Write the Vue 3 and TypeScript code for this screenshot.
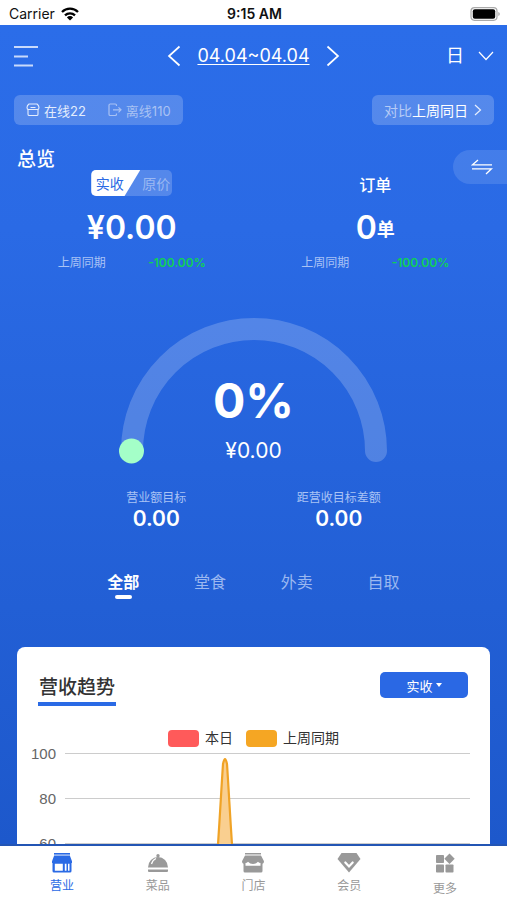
<script setup lang="ts">
import { ref } from 'vue'

interface Tab {
  id: string
  label: string
}

const channels: Tab[] = [
  { id: 'all', label: '全部' },
  { id: 'dine', label: '堂食' },
  { id: 'takeout', label: '外卖' },
  { id: 'pickup', label: '自取' },
]
const activeChannel = ref('all')

const navItems: Tab[] = [
  { id: 'business', label: '营业' },
  { id: 'dishes', label: '菜品' },
  { id: 'store', label: '门店' },
  { id: 'member', label: '会员' },
  { id: 'more', label: '更多' },
]
const activeNav = ref('business')

const priceMode = ref<'net' | 'gross'>('net')

const targets = [
  { label: '营业额目标', value: '0.00' },
  { label: '距营收目标差额', value: '0.00' },
]

const ticks = [100, 80, 60]
</script>

<template>
  <div class="app">
    <div class="status">
      <div class="carrier">
        <span>Carrier</span>
        <svg width="18" height="14" viewBox="0 0 18 14" aria-hidden="true">
          <g fill="none" stroke="#000" stroke-width="2.3">
            <path d="M1 5a11.4 11.4 0 0 1 16 0" />
            <path d="M4 8.300a7.200 7.200 0 0 1 10 0" />
          </g>
          <path d="M9 13.500 5.900 10.400a4.400 4.400 0 0 1 6.200 0z" />
        </svg>
      </div>
      <span class="clock">9:15 AM</span>
      <svg class="battery" width="30" height="14" viewBox="0 0 30 14" aria-hidden="true">
        <rect x="1" y="0.700" width="26" height="12.600" rx="3.500" fill="#fff" stroke="#aaa" stroke-width="1.200" />
        <rect x="2.800" y="2.300" width="22.400" height="9.400" rx="2" />
        <path d="M28.300 5v4q1.500-.5 1.500-2t-1.500-2z" fill="#aaa" />
      </svg>
    </div>

    <main class="dashboard">
      <header class="toolbar">
        <button class="menu" aria-label="菜单">
          <svg width="26" height="24" viewBox="0 0 26 24" fill="none" stroke="#c9dafb" stroke-width="2">
            <path d="M1 3h24M1 12.500h14M1 21.500h19" />
          </svg>
        </button>
        <div class="dates">
          <button aria-label="前一天">
            <svg width="14" height="22" viewBox="0 0 14 22" fill="none" stroke="#fff" stroke-width="1.700">
              <path d="M12.500 1.500 2 11l10.500 9.500" />
            </svg>
          </button>
          <a href="#">04.04~04.04</a>
          <button aria-label="后一天">
            <svg width="14" height="22" viewBox="0 0 14 22" fill="none" stroke="#fff" stroke-width="1.700">
              <path d="M1.500 1.500 12 11 1.500 20.500" />
            </svg>
          </button>
        </div>
        <button class="unit">
          <span>日</span>
          <svg width="16" height="10" viewBox="0 0 16 10" fill="none" stroke="#fff" stroke-width="1.200">
            <path d="m1 1 7 7.500L15 1" />
          </svg>
        </button>
      </header>

      <div class="filters">
        <div class="chip presence">
          <span class="online">
            <svg width="14" height="14" viewBox="0 0 14 14" fill="none" stroke="currentColor" stroke-width="1.100">
              <path d="M3 1h8q2 1.500 2 3.500 0 2-1.500 2h-9Q1 6.500 1 4.500 1 2.500 3 1zM4.500 4.500h5M2 6.500v4.700Q2 12.500 3.300 12.500h7.400q1.300 0 1.300-1.300V6.500" />
            </svg>
            在线22
          </span>
          <span class="offline">
            <svg width="14" height="14" viewBox="0 0 14 14" fill="none" stroke="currentColor" stroke-width="1.200">
              <path d="M8.500 3V2.300Q8.500 1 7.200 1H2.300Q1 1 1 2.300v8.900q0 1.300 1.300 1.300h4.900q1.300 0 1.300-1.300v-.7M5 6.800h8M10.500 4.300 13 6.800l-2.500 2.500" />
            </svg>
            离线110
          </span>
        </div>
        <button class="chip compare">
          <span><i>对比</i>上周同日</span>
          <svg width="8" height="12" viewBox="0 0 8 12" fill="none" stroke="#e6eefd" stroke-width="1.200">
            <path d="m1 1 5.500 5L1 11" />
          </svg>
        </button>
      </div>

      <section class="overview">
        <h2>总览</h2>
        <button class="swap" aria-label="切换">
          <svg width="22" height="16" viewBox="0 0 22 16" fill="none" stroke="#fff" stroke-width="1.300">
            <path d="M21 5.800H1.500L7 1M1 9.800h19.500L15 15" />
          </svg>
        </button>
        <div class="metric">
          <div class="mode">
            <button :class="{ on: priceMode === 'net' }" @click="priceMode = 'net'">实收</button>
            <button :class="{ on: priceMode === 'gross' }" @click="priceMode = 'gross'">原价</button>
          </div>
          <strong>¥0.00</strong>
          <p><span>上周同期</span><b>-100.00%</b></p>
        </div>
        <div class="metric">
          <h3>订单</h3>
          <strong>0<small>单</small></strong>
          <p><span>上周同期</span><b>-100.00%</b></p>
        </div>
      </section>

      <section class="gauge">
        <svg width="270" height="150" viewBox="0 0 270 150" aria-hidden="true">
          <path d="M13 133a122 122 0 0 1 244 0" fill="none" stroke="#fff" stroke-opacity=".2" stroke-width="22" stroke-linecap="round" />
          <circle cx="12.500" cy="133" r="12.500" fill="#a4ffc8" />
        </svg>
        <div class="reading">
          <strong>0%</strong>
          <span>¥0.00</span>
        </div>
      </section>

      <dl class="targets">
        <div v-for="t in targets" :key="t.label">
          <dt>{{ t.label }}</dt>
          <dd>{{ t.value }}</dd>
        </div>
      </dl>

      <div class="channels">
        <button
          v-for="c in channels"
          :key="c.id"
          :class="{ on: activeChannel === c.id }"
          @click="activeChannel = c.id"
        >
          {{ c.label }}
        </button>
      </div>

      <section class="card">
        <div class="card-head">
          <h2>营收趋势</h2>
          <button class="picker">
            实收
            <svg width="6" height="4" viewBox="0 0 6 4" aria-hidden="true"><path d="M0 0h6L3 4z" fill="#fff" /></svg>
          </button>
        </div>
        <div class="legend">
          <span><i class="today"></i>本日</span>
          <span><i class="last"></i>上周同期</span>
        </div>
        <div class="chart">
          <div v-for="n in ticks" :key="n" class="tick">
            <span>{{ n }}</span>
            <hr />
          </div>
          <svg class="peak" width="30" height="160" viewBox="0 0 30 160" aria-hidden="true">
            <path d="M3 160C8 104 10.500 50 13 13Q15 3 17 13C19.500 50 22 104 27 160z" fill="#f9cf90" stroke="#f0a326" stroke-width="2.200" />
          </svg>
        </div>
      </section>
    </main>

    <nav class="tabbar">
      <button
        v-for="item in navItems"
        :key="item.id"
        :class="[item.id, { on: activeNav === item.id }]"
        @click="activeNav = item.id"
      >
        <svg width="24" height="20" viewBox="0 0 24 20" fill="currentColor" aria-hidden="true">
          <template v-if="item.id === 'business'">
            <path d="M4 0h16v3H4z" opacity=".5" />
            <path d="M4 0h16v1.200H4zM4 3h16l2 5.200V10h-.5v8q0 1.500-1.500 1.500H4Q2.500 19.500 2.500 18v-8H2V8.200z" />
            <path d="M4.800 10.800h8v7h-8zM14.800 10.800h1.700v7h-1.700zM18 10.800h1.500v7H18z" fill="#fff" />
          </template>
          <template v-else-if="item.id === 'dishes'">
            <circle cx="12" cy="2.700" r="1.700" />
            <path d="M2 14.500a10 10.500 0 0 1 20 0zM2 16.500h20V18q0 1-1 1H3q-1 0-1-1z" />
            <path d="M5.500 11q1-4 4.500-5.500" fill="none" stroke="#fff" stroke-width="1.200" />
          </template>
          <template v-else-if="item.id === 'store'">
            <path d="M4 0h16v1.500H4z" />
            <path d="M4 2.500h16l3 5.700q0 2-1.500 2.600V18q0 1.500-1.500 1.500H4Q2.500 19.500 2.500 18v-7.200Q1 10.200 1 8.200z" />
            <path d="M4.500 10q1.500 0 2.500-1.200Q9 11 12 11t5-2.200Q18 10 19.500 10v2.800h-15z" fill="#fff" />
          </template>
          <template v-else-if="item.id === 'member'">
            <path d="M4.500 0h15L23.500 6 12 19.500.5 6z" />
            <path d="m8.300 9.500 3.700 4 3.700-4" fill="none" stroke="#fff" stroke-width="2.200" stroke-linecap="round" />
          </template>
          <template v-else>
            <rect x="3" y="2" width="8" height="8" rx=".8" />
            <rect x="3" y="11.500" width="8" height="8" rx=".8" />
            <rect x="12.500" y="11.500" width="8" height="8" rx=".8" />
            <path d="m16.500.6 5.200 5.200-5.200 5.200-5.200-5.200z" />
          </template>
        </svg>
        <span>{{ item.label }}</span>
      </button>
    </nav>
  </div>
</template>

<style>
body {
  margin: 0;
}
</style>

<style scoped>
* {
  box-sizing: border-box;
}
.app {
  display: flex;
  flex-direction: column;
  height: 100vh;
  overflow: hidden;
  background: #fff;
  color: #fff;
  font-family: Inter, "Noto Sans CJK SC", sans-serif;
}
button {
  padding: 0;
  border: 0;
  background: none;
  color: inherit;
  font: inherit;
  white-space: nowrap;
  cursor: pointer;
}
h2,
h3,
p,
dl,
dd {
  margin: 0;
}
svg {
  display: block;
  flex: none;
}
.status {
  display: grid;
  grid-template-columns: 1fr auto 1fr;
  align-items: center;
  height: 25px;
  padding: 2px 7px 0 9px;
  color: #111;
  font-size: 14px;
  line-height: 20px;
}
.carrier {
  display: flex;
  align-items: center;
  gap: 6px;
}
.clock {
  font-weight: 600;
}
.battery {
  justify-self: end;
}
.dashboard {
  flex: 1;
  min-height: 0;
  overflow: hidden;
  background: linear-gradient(#2b6de9, #2a6ae5 25%, #1d58cb);
  border-bottom: 2px solid #2355b4;
}
.toolbar {
  display: grid;
  grid-template-columns: 1fr auto 1fr;
  align-items: center;
  height: 62px;
  padding: 0 13px;
}
.menu {
  justify-self: start;
}
.dates {
  display: flex;
  align-items: center;
  gap: 16px;
}
.dates a {
  color: #fff;
  font-size: 18px;
  line-height: 24px;
  text-decoration: underline;
  text-underline-offset: 2px;
}
.unit {
  display: flex;
  align-items: center;
  justify-self: end;
  gap: 14px;
  font-size: 18px;
  line-height: 24px;
}
.filters {
  display: flex;
  justify-content: space-between;
  padding: 8px 13px 0 14px;
}
.chip {
  display: flex;
  align-items: center;
  height: 30px;
  padding: 0 12px;
  border-radius: 6px;
  background: rgba(255, 255, 255, 0.2);
  font-size: 13px;
}
.presence {
  gap: 22px;
}
.presence span {
  display: flex;
  align-items: center;
  gap: 4px;
}
.online {
  color: #e4edfd;
}
.offline {
  color: #a9c2f3;
}
.compare {
  gap: 6px;
}
.compare span {
  font-size: 14px;
}
.compare i {
  color: #b5cbf6;
  font-style: normal;
}
.overview {
  position: relative;
  display: grid;
  grid-template-columns: 1fr 1fr;
  padding: 45px 10px 0;
}
.overview h2 {
  position: absolute;
  top: 22px;
  left: 17px;
  font-size: 19px;
  font-weight: 500;
  line-height: 26px;
}
.swap {
  position: absolute;
  top: 25px;
  right: 0;
  display: flex;
  align-items: center;
  width: 54px;
  height: 34px;
  padding-left: 18px;
  border-radius: 17px 0 0 17px;
  background: rgba(255, 255, 255, 0.12);
}
.metric {
  display: flex;
  flex-direction: column;
  align-items: center;
}
.mode {
  display: flex;
  width: 81px;
  height: 26px;
  border-radius: 5px;
  background: rgba(255, 255, 255, 0.2);
  overflow: hidden;
}
.mode button {
  flex: 1;
  color: #9bb8f2;
  font-size: 14px;
}
.mode .on {
  flex: none;
  width: 49px;
  padding: 0 12px 0 0;
  background: #fff;
  color: #2b6ae4;
  clip-path: polygon(0 0, 100% 0, 68% 100%, 0 100%);
}
.metric h3 {
  height: 26px;
  padding-top: 4px;
  font-size: 16px;
  font-weight: 500;
  line-height: 22px;
}
.metric strong {
  height: 40px;
  margin-top: 12px;
  font-size: 32px;
  font-weight: 600;
  line-height: 40px;
}
.metric small {
  font-size: 18px;
  line-height: 18px;
  vertical-align: 3px;
}
.metric p {
  display: flex;
  justify-content: space-between;
  width: 148px;
  margin-top: 5px;
  font-size: 12px;
  line-height: 20px;
}
.metric p span {
  color: #a9c3f5;
}
.metric p b {
  color: #0fd155;
  font-weight: 600;
}
.gauge {
  position: relative;
  display: flex;
  justify-content: center;
  padding-top: 45px;
}
.reading {
  position: absolute;
  top: 98px;
  left: 0;
  right: 0;
  display: flex;
  flex-direction: column;
  align-items: center;
}
.reading strong {
  font-size: 48px;
  line-height: 60px;
}
.reading span {
  margin-top: 7px;
  font-size: 21px;
  line-height: 26px;
}
.targets {
  display: grid;
  grid-template-columns: 1fr 1fr;
  padding: 21px 77px 0 65px;
  text-align: center;
}
.targets dt {
  color: #a9c3f5;
  font-size: 12px;
  line-height: 18px;
}
.targets dd {
  font-size: 21px;
  font-weight: 600;
  line-height: 24px;
}
.channels {
  display: grid;
  grid-template-columns: repeat(4, 1fr);
  padding: 39px 80px 0;
}
.channels button {
  display: flex;
  flex-direction: column;
  align-items: center;
  color: #9bb8f0;
  font-size: 16px;
  line-height: 24px;
}
.channels button::after {
  width: 17px;
  height: 4px;
  margin-top: 1px;
  border-radius: 2px;
  content: "";
}
.channels .on {
  color: #fff;
  font-weight: 600;
}
.channels .on::after {
  background: #fff;
}
.card {
  height: 400px;
  margin: 48px 17px 0;
  padding: 25px 20px 0;
  border-radius: 8px;
  background: #fff;
  color: #333;
}
.card-head {
  display: flex;
  align-items: flex-start;
  justify-content: space-between;
  padding: 0 2px 0 1px;
}
.card h2 {
  padding: 2px 1px 0;
  border-bottom: 4px solid #2a6ae5;
  font-size: 19px;
  font-weight: 500;
  line-height: 28px;
}
.picker {
  display: flex;
  align-items: center;
  justify-content: center;
  gap: 3px;
  width: 88px;
  height: 26px;
  border-radius: 5px;
  background: #2a68e4;
  color: #fff;
  font-size: 13px;
}
.legend {
  display: flex;
  justify-content: center;
  gap: 13px;
  margin-top: 22px;
  font-size: 14px;
  line-height: 20px;
}
.legend span {
  display: flex;
  align-items: center;
  gap: 6px;
}
.legend i {
  width: 31px;
  height: 17px;
  border-radius: 4px;
}
.today {
  background: #ff5a5a;
}
.last {
  background: #f5a623;
}
.chart {
  position: relative;
  margin-top: -17px;
}
.tick {
  display: flex;
  align-items: center;
  gap: 9px;
  height: 45px;
  margin-left: -6px;
  color: #666;
  font-family: "Liberation Sans", sans-serif;
  font-size: 15px;
}
.tick span {
  width: 25px;
  text-align: right;
}
.tick hr {
  flex: 1;
  margin: 0;
  border: 0;
  border-top: 1px solid #ccc;
}
.peak {
  position: absolute;
  top: 20px;
  left: 40%;
}
.tabbar {
  display: grid;
  grid-template-columns: repeat(5, 1fr);
  height: 54px;
  padding: 7px 14px 0;
  background: #fff;
}
.tabbar button {
  display: flex;
  flex-direction: column;
  align-items: center;
  gap: 4px;
  color: #999;
  font-size: 12px;
  line-height: 18px;
}
.tabbar .more {
  gap: 7px;
}
.tabbar .on {
  color: #2a6ae5;
}
</style>
